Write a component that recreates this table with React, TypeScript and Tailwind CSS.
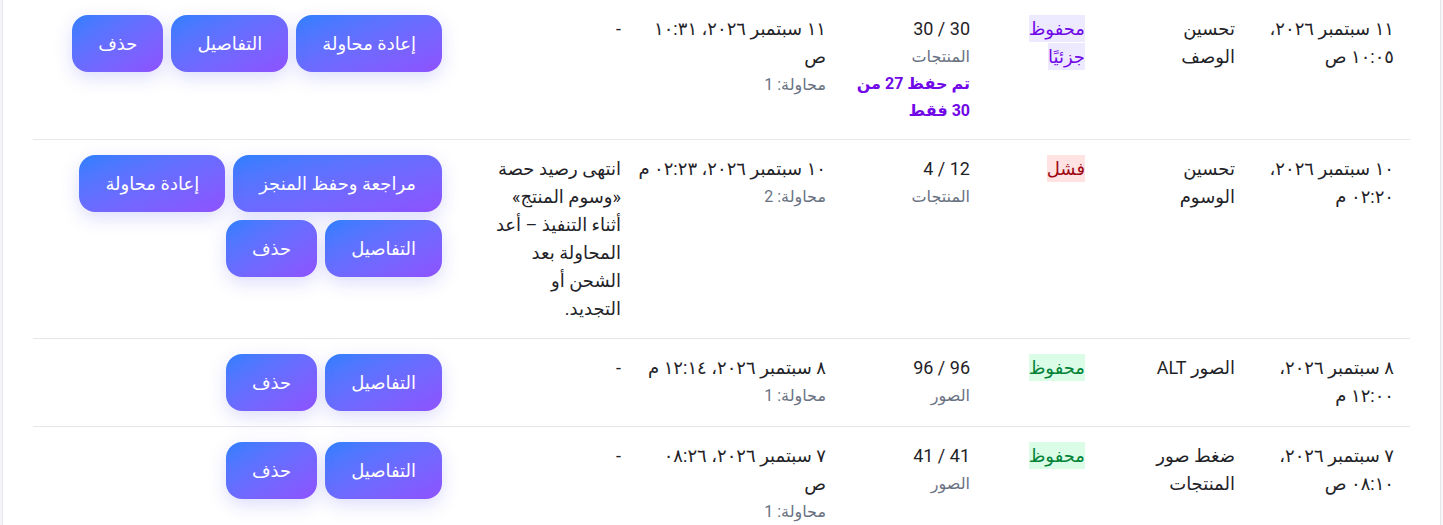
import React from 'react';

type Status = 'partial' | 'failed' | 'saved';

type Job = {
  started: string;
  type: string;
  status: Status;
  count: string;
  unit: string;
  note?: string;
  last: string;
  attempt: string;
  error: string;
  actions: string[];
};

// line breaks kept as in the design so the narrow columns wrap the same way
const JOBS: Job[] = [
  {
    started: '١١ سبتمبر ٢٠٢٦،\n١٠:٠٥ ص',
    type: 'تحسين\nالوصف',
    status: 'partial',
    count: '30 / 30',
    unit: 'المنتجات',
    note: 'تم حفظ 27 من\n30 فقط',
    last: '١١ سبتمبر ٢٠٢٦، ١٠:٣١\nص',
    attempt: 'محاولة: 1',
    error: '-',
    actions: ['إعادة محاولة', 'التفاصيل', 'حذف'],
  },
  {
    started: '١٠ سبتمبر ٢٠٢٦،\n٠٢:٢٠ م',
    type: 'تحسين\nالوسوم',
    status: 'failed',
    count: '4 / 12',
    unit: 'المنتجات',
    last: '١٠ سبتمبر ٢٠٢٦، ٠٢:٢٣ م',
    attempt: 'محاولة: 2',
    error: 'انتهى رصيد حصة\n«وسوم المنتج»\nأثناء التنفيذ – أعد\nالمحاولة بعد\nالشحن أو\nالتجديد.',
    actions: ['مراجعة وحفظ المنجز', 'إعادة محاولة', 'التفاصيل', 'حذف'],
  },
  {
    started: '٨ سبتمبر ٢٠٢٦،\n١٢:٠٠ م',
    type: 'الصور ALT',
    status: 'saved',
    count: '96 / 96',
    unit: 'الصور',
    last: '٨ سبتمبر ٢٠٢٦، ١٢:١٤ م',
    attempt: 'محاولة: 1',
    error: '-',
    actions: ['التفاصيل', 'حذف'],
  },
  {
    started: '٧ سبتمبر ٢٠٢٦،\n٠٨:١٠ ص',
    type: 'ضغط صور\nالمنتجات',
    status: 'saved',
    count: '41 / 41',
    unit: 'الصور',
    last: '٧ سبتمبر ٢٠٢٦، ٠٨:٢٦\nص',
    attempt: 'محاولة: 1',
    error: '-',
    actions: ['التفاصيل', 'حذف'],
  },
];

const STATUS_LABEL: Record<Status, string> = {
  partial: 'محفوظ\nجزئيًا',
  failed: 'فشل',
  saved: 'محفوظ',
};

const STATUS_CLASS: Record<Status, string> = {
  partial: 'bg-violet-100 text-violet-700',
  failed: 'bg-red-100 text-red-800',
  saved: 'bg-green-100 text-green-700',
};

function ActionButton({ label }: { label: string }) {
  return (
    <button className="h-[57px] px-[26px] rounded-2xl bg-linear-to-br from-blue-500 to-violet-500 text-white text-[18px] leading-none whitespace-nowrap shadow-[0_6px_18px_rgba(99,102,241,0.22)]">
      {label}
    </button>
  );
}

export default function App() {
  return (
    <div className="min-h-screen bg-[#f5f6f8] font-['Roboto','DejaVu_Sans',sans-serif]" dir="rtl">
      <div className="mx-[2px] min-h-screen border-x border-gray-200 bg-white px-[30px]">
        <table className="w-full table-fixed border-collapse text-[18px] leading-[28px] text-[#1f2328]">
          <colgroup>
            <col className="w-[159px]" />
            <col className="w-[150px]" />
            <col className="w-[115px]" />
            <col className="w-[144px]" />
            <col className="w-[205px]" />
            <col className="w-[179px]" />
            <col />
          </colgroup>
          <tbody>
            {JOBS.map((job, i) => (
              <tr key={i} className={i > 0 ? 'border-t border-gray-200' : ''}>
                <td className="px-4 py-[15px] align-top text-right whitespace-pre">{job.started}</td>
                <td className="px-4 py-[15px] align-top text-right whitespace-pre">{job.type}</td>
                <td className="px-4 py-[15px] align-top text-right whitespace-pre">
                  <span className={`box-decoration-clone py-[3px] ${STATUS_CLASS[job.status]}`}>
                    {STATUS_LABEL[job.status]}
                  </span>
                </td>
                <td className="px-4 py-[15px] align-top text-right">
                  <div dir="ltr" className="text-right">{job.count}</div>
                  <div className="text-[16px] leading-[27px] text-gray-500">{job.unit}</div>
                  {job.note && (
                    <div className="text-[16px] leading-[27px] font-bold text-violet-700 whitespace-pre">{job.note}</div>
                  )}
                </td>
                <td className="px-4 py-[15px] align-top text-right">
                  <div className="whitespace-pre">{job.last}</div>
                  <div className="text-[16px] leading-[27px] text-gray-500">{job.attempt}</div>
                </td>
                <td className="px-4 py-[15px] align-top text-right whitespace-pre">{job.error}</td>
                <td className="px-4 py-[15px] align-top">
                  <div className="flex flex-wrap gap-2">
                    {job.actions.map((a) => (
                      <ActionButton key={a} label={a} />
                    ))}
                  </div>
                </td>
              </tr>
            ))}
          </tbody>
        </table>
      </div>
    </div>
  );
}
